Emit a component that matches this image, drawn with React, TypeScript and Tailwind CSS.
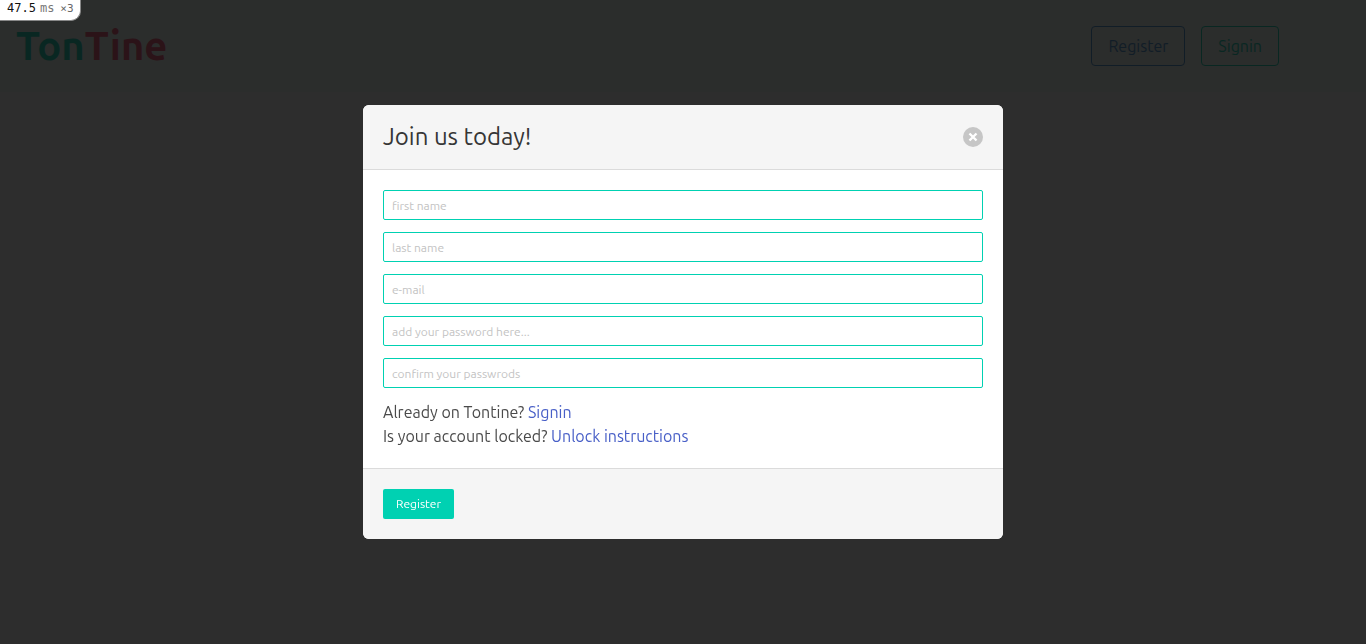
const fields = [
  { id: "first-name", type: "text", label: "first name" },
  { id: "last-name", type: "text", label: "last name" },
  { id: "email", type: "email", label: "e-mail" },
  { id: "password", type: "password", label: "add your password here..." },
  { id: "confirm-password", type: "password", label: "confirm your passwrods" },
];

function Header() {
  return (
    <header className="flex items-start justify-between bg-[#effaf5] pt-[26px] pr-[87px] pb-[26px] pl-4">
      <h1 className="h-10 text-[40px] leading-10 font-bold">
        <a href="#home">
          <span className="text-[#00d1b2]">Ton</span>
          <span className="text-[#f14668]">Tine</span>
        </a>
      </h1>
      <nav className="flex gap-4">
        <button type="button" className="h-10 rounded border border-[#3e8ed0] px-4 text-base text-[#3e8ed0]">
          Register
        </button>
        <button type="button" className="h-10 rounded border border-[#00d1b2] px-4 text-base text-[#00d1b2]">
          Signin
        </button>
      </nav>
    </header>
  );
}

function JoinDialog() {
  return (
    <form
      role="dialog"
      aria-labelledby="join-title"
      className="flex w-[640px] max-w-full flex-col overflow-hidden rounded-md bg-white text-[#4a4a4a]"
    >
      <header className="flex items-center justify-between border-b border-[#dbdbdb] bg-[#f5f5f5] p-5">
        <h2 id="join-title" className="text-2xl leading-6 text-[#363636]">
          Join us today!
        </h2>
        <button
          type="button"
          aria-label="close"
          className="flex size-5 items-center justify-center rounded-full bg-[#c6c6c6] text-white"
        >
          <svg viewBox="0 0 20 20" className="size-5" stroke="currentColor" strokeWidth="2.4">
            <path d="M6.5 6.5l7 7M13.5 6.5l-7 7" />
          </svg>
        </button>
      </header>
      <div className="p-5">
        <div className="flex flex-col gap-3">
          {fields.map((field) => (
            <input
              key={field.id}
              id={field.id}
              type={field.type}
              aria-label={field.label}
              placeholder={field.label}
              className="h-[30px] w-full rounded-xs border border-[#00d1b2] bg-white px-2 text-xs text-[#363636] placeholder:text-[#c3c3c3]"
            />
          ))}
        </div>
        <div className="pt-3 text-base leading-6">
          <p>
            Already on Tontine?{" "}
            <a href="#signin" className="text-[#485fc7]">
              Signin
            </a>
          </p>
          <p>
            Is your account locked?{" "}
            <a href="#unlock" className="text-[#485fc7]">
              Unlock instructions
            </a>
          </p>
        </div>
      </div>
      <footer className="flex border-t border-[#dbdbdb] bg-[#f5f5f5] p-5">
        <button
          type="submit"
          className="h-[30px] rounded-xs border border-transparent bg-[#00d1b2] px-3 text-xs text-white"
        >
          Register
        </button>
      </footer>
    </form>
  );
}

function TimingBadge() {
  return (
    <div className="fixed top-0 left-0 z-20 flex items-baseline rounded-br-[10px] border-r border-b border-[#888] bg-white pr-1.5 pb-[3px] pl-[7px] font-['DejaVu_Sans_Mono',monospace] text-xs leading-4 text-[#111]">
      <span>47.5</span>
      <span className="pr-1.5 pl-1 text-[#777]">ms</span>
      <span className="text-[11px] text-[#666]">×3</span>
    </div>
  );
}

export default function App() {
  return (
    <div className="min-h-screen bg-white font-['Ubuntu','Noto_Sans',sans-serif]">
      <Header />
      <div className="fixed inset-0 z-10 flex items-center justify-center bg-[#0a0a0a]/86">
        <JoinDialog />
      </div>
      <TimingBadge />
    </div>
  );
}
